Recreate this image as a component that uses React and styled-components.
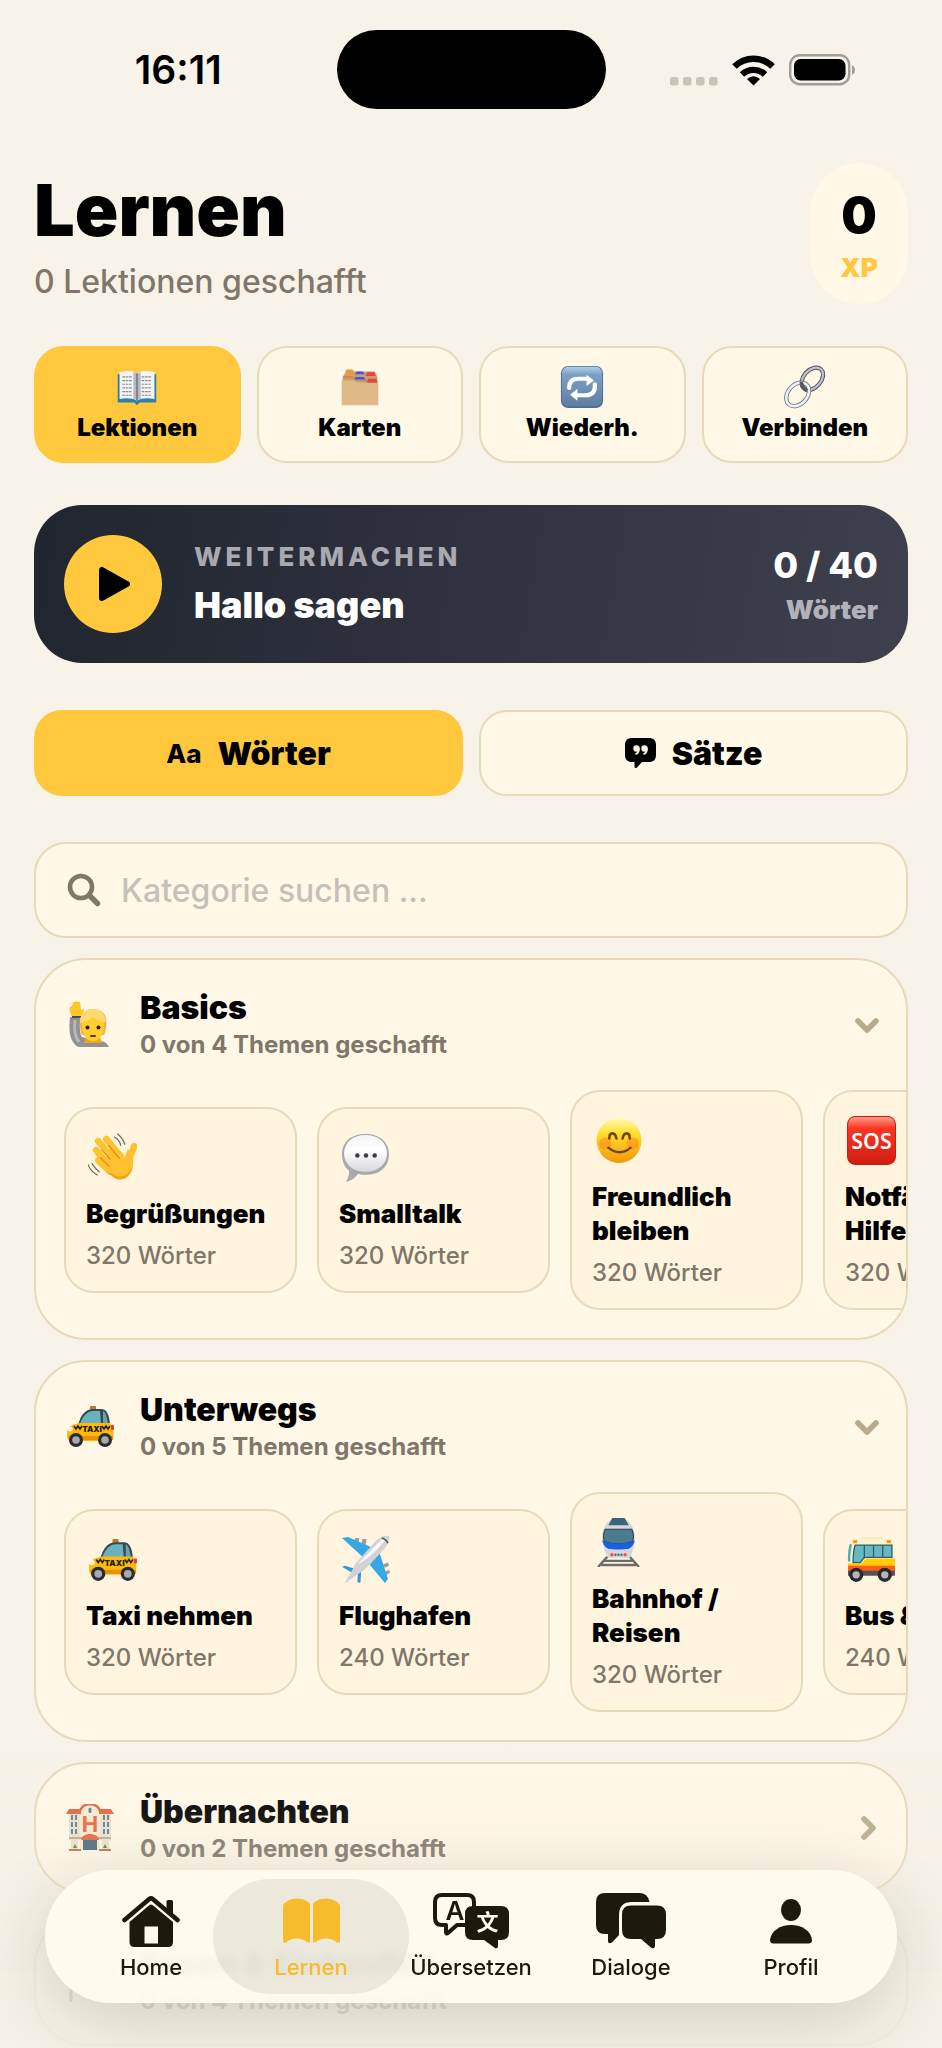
import React, { useState } from "react";
import styled, { createGlobalStyle, css } from "styled-components";

const color = {
  page: "#f8f3e8",
  surface: "#fff8e7",
  tile: "#fff5df",
  line: "#e8d9b9",
  muted: "#80766a",
  faint: "#b9aa8b",
  accent: "#ffc83d",
  ink: "#1d190d",
};

const GlobalStyle = createGlobalStyle`
  *, *::before, *::after { box-sizing: border-box; }
  body {
    margin: 0;
    background: ${color.page};
    color: #000;
    font-family: Inter, "Liberation Sans", sans-serif;
    -webkit-font-smoothing: antialiased;
  }
  button, input { font: inherit; color: inherit; }
  h1, h2, h3, p { margin: 0; }
`;

/* ---------- emoji drawings ---------- */

const BookEmoji = () => (
  <>
    <path d="M3 10h42v31H27l-3 3-3-3H3z" fill="#2b82a8" />
    <path d="M5 8c7-2 14-2 19 1 5-3 12-3 19-1v29c-7-1-14-1-19 2-5-3-12-3-19-2z" fill="#f4f4f6" />
    <path d="M20 8c2 0 3 1 4 2 1-1 2-2 4-2v29c-2 0-3 1-4 2-1-1-2-2-4-2z" fill="#b9bac0" />
    <path d="M24 9v30" stroke="#66676e" strokeWidth="1.4" />
    <path d="M8 13h11M8 17h11M8 21h10M8 25h11M8 29h10M8 33h11M29 13h11M29 17h11M29 21h10M29 25h11M29 29h10M29 33h11" stroke="#8c8d94" strokeWidth="1.3" strokeDasharray="3 .7" />
  </>
);

const DividersEmoji = () => (
  <>
    <path d="M5 13l4-6h31l3 6v10H5z" fill="#c99f6c" />
    <path d="M9 5h7l2 3H8zM8 10h8l2 3H6z" fill="#ff9433" />
    <path d="M20 7h7l2 3H19zM19 13h9l2 3H18z" fill="#4054f0" />
    <path d="M32 8h8l1 4H30zM33 15h9l1 4H31z" fill="#f73d3d" />
    <path d="M6 13h10l3 3h10l3 3h11" fill="none" stroke="#a87f4f" strokeWidth="1" />
    <path d="M4 17h14l2 2h12l2 1h10v24H4z" fill="#e0b988" />
  </>
);

const RepeatEmoji = () => (
  <>
    <rect x="1" y="1" width="46" height="46" rx="8" fill="#4f6f92" />
    <rect x="2" y="2" width="44" height="43" rx="7" fill="url(#repeatBlue)" />
    <path d="M10 25c0-7 4-10 10-10h10M38 21c1 8-3 12-10 12H18" fill="none" stroke="#fff" strokeWidth="4.6" strokeLinecap="round" />
    <path d="M29 10.500l8 6.500-8 6z M19 26v13l-8-6.500z" fill="#fff" />
  </>
);

const LinkEmoji = () => (
  <g fill="none">
    <ellipse cx="32" cy="15" rx="9.500" ry="14" transform="rotate(42 32 15)" stroke="#57505a" strokeWidth="4.600" />
    <ellipse cx="32" cy="15" rx="9.500" ry="14" transform="rotate(42 32 15)" stroke="#b9c5d3" strokeWidth="2.400" />
    <ellipse cx="16" cy="32" rx="10.500" ry="14.500" transform="rotate(42 16 32)" stroke="#66727f" strokeWidth="4.600" />
    <ellipse cx="16" cy="32" rx="10.500" ry="14.500" transform="rotate(42 16 32)" stroke="#eef2f6" strokeWidth="2.800" />
    <path d="M20 18c0 4 2 7 6 10" stroke="#5d5660" strokeWidth="4" />
  </g>
);

const RaisedHandEmoji = () => (
  <>
    <path d="M4 17c-1 10-1 19 3 25 2 3 4 5 7 5h29c-2-5-8-7-14-7l-13-3c-3-4-2-13-2-20z" fill="#929296" />
    <path d="M9 20c-1 8 0 17 4 22" fill="none" stroke="#b8b8bc" strokeWidth="3" />
    <path d="M6 17c-2-4-3-7-2-10l2-1 1-4h2l1-1 2 1h2l1 8 3-1c0 3-2 6-4 8z" fill="#ffc62b" />
    <path d="M6 17h9" stroke="#494a50" strokeWidth="1.800" />
    <path d="M20 37h14l2 6H18z" fill="#efa91c" />
    <path d="M14 26c-1-10 4-17 13-17 10 0 15 7 13 17 0 3-1 7-2 9H16c-1-2-2-6-2-9z" fill="#eeb53a" />
    <path d="M16 24c0-5 4-8 11-8s11 3 11 8c0 10-4 17-11 17s-11-7-11-17z" fill="#ffce2e" />
    <path d="M14 23c0-9 5-14 13-14 7 0 12 4 13 13-5 0-10-2-13-5-3 3-8 5-13 6z" fill="#ffd970" />
    <circle cx="21.500" cy="27.500" r="2" fill="#2a1a0c" />
    <circle cx="32.500" cy="27.500" r="2" fill="#2a1a0c" />
    <path d="M25 36h4" stroke="#6a3300" strokeWidth="2" fill="none" strokeLinecap="round" />
  </>
);

const WaveEmoji = () => (
  <>
    <g fill="none" strokeLinecap="round" strokeLinejoin="round" stroke="#ffc22e" strokeWidth="6.500">
      <path d="M10 8l15 17M18 6l14 17M8 17l15 17M10 27l12 11" />
      <path d="M45 13c-1 6-4 8-5 12" />
    </g>
    <path d="M24 37l-8-9 6-14 13 11 4-9 6 3c-1 5 0 14-3 20-4 7-12 9-19 3z" fill="#ffc22e" />
    <path d="M24 40c8 6 17 1 20-9-1 11-11 18-19 12l-8-6z" fill="#e98f0c" opacity=".6" />
    <path d="M13 16l9 10M20 12l11 13M12 24l9 9" stroke="#dd8b12" strokeWidth="1.200" fill="none" />
    <path d="M29 1q5 4 7 10M26 4q5 3 6 8M0 31q3 7 9 10M4 30q3 5 7 8" stroke="#6d6961" strokeWidth="1.200" fill="none" strokeLinecap="round" />
  </>
);

const SpeechEmoji = () => (
  <>
    <path d="M24 1c14 0 23 8 23 20S38 41 24 41c-2 0-5 0-7-1-3 4-7 7-12 8 2-4 3-7 3-11C3 33 1 27 1 21 1 9 10 1 24 1z" fill="#a8a8ad" />
    <path d="M24 2c13 0 21 8 21 18s-8 18-21 18C11 38 3 30 3 20S11 2 24 2z" fill="url(#bubbleWhite)" />
    <g fill="#3d3d40">
      <circle cx="16" cy="22" r="2.200" />
      <circle cx="24.500" cy="22" r="2.200" />
      <circle cx="33" cy="22" r="2.200" />
    </g>
  </>
);

const SmileEmoji = () => (
  <>
    <circle cx="24.500" cy="24" r="22" fill="url(#faceYellow)" />
    <circle cx="11" cy="27" r="6" fill="#ff8411" opacity=".5" />
    <circle cx="38" cy="27" r="6" fill="#ff8411" opacity=".5" />
    <path d="M15 22q0-5 3-5t4 5M28 22q1-5 4-5t3 5" stroke="#754300" strokeWidth="2.500" fill="none" strokeLinecap="round" />
    <path d="M14 31q11 9 22 0" stroke="#754300" strokeWidth="2.200" fill="none" strokeLinecap="round" />
  </>
);

const SosEmoji = () => (
  <>
    <rect x="0" y="0" width="48" height="48" rx="8" fill="#c81d10" />
    <rect x="1" y="1" width="46" height="45" rx="7" fill="url(#sosRed)" />
    <text x="24" y="32" textAnchor="middle" fontFamily="Noto Sans, sans-serif" fontWeight="600" fontSize="21" fill="#fff">SOS</text>
  </>
);

const TaxiEmoji = () => (
  <>
    <rect x="24" y="4" width="6" height="4" rx="1" fill="#b17e31" />
    <path d="M12 23C15 12 20 7 27 7h8c6 0 8 6 9 15z" fill="#3c4550" />
    <path d="M14 22c3-9 8-13 13-13h7l1 13z" fill="#69b3bf" />
    <path d="M37 9c3 1 4 7 5 12l-5 1z" fill="#62a4b0" />
    <path d="M1 31c0-6 5-9 13-10h30c3 3 4 8 3 16l-3 2H3c-2-2-2-5-2-8z" fill="#ffb90c" />
    <path d="M2 34h45v4H3z" fill="#e99200" />
    <path d="M8 24l2 3 2-3 2 3 2-3M36 24l2 3 2-3 2 3 2-3" stroke="#2d2616" strokeWidth="1.600" fill="none" />
    <text x="26" y="30" textAnchor="middle" fontFamily="Inter, sans-serif" fontWeight="900" fontSize="8" fill="#241e0d">TAXI</text>
    <circle cx="4" cy="27" r="2.600" fill="#fff3e2" />
    <rect x="45" y="23" width="3" height="5" rx="1" fill="#ef3838" />
    <circle cx="10" cy="38" r="7" fill="#2b2c31" />
    <circle cx="10" cy="38" r="3.800" fill="#a7a9af" />
    <circle cx="39" cy="38" r="7" fill="#2b2c31" />
    <circle cx="39" cy="38" r="3.800" fill="#a7a9af" />
  </>
);

const PlaneEmoji = () => (
  <>
    <path d="M14 3h4l-1 6h-4zM21 4h4l-1 6h-4zM46 27l-5 2 2 3 4-2zM47 34l-4 2v4l5-3z" fill="#9a9aa0" />
    <path d="M1 3l6-1 25 11-9 10zM46 43l-3 4-15-18 10-11z" fill="#35a7e4" />
    <path d="M1 31l3-1 13 4-3 5zM19 47l-3-1 1-13 3-2z" fill="#3398d6" />
    <path d="M4 46C12 34 12 31 16 26L35 5c4-4 9-5 12-4 1 4-1 8-4 12L23 34c-5 4-10 6-18 13z" fill="#d1d1d6" />
    <path d="M16 29L36 8c3-3 6-5 9-5-8 10-17 20-29 26z" fill="#fafafc" />
    <path d="M40 3q4 1 6 5" stroke="#55565f" strokeWidth="1.600" fill="none" />
  </>
);

const TrainEmoji = () => (
  <>
    <path d="M13 38L4 48M35 38l9 10M10 42h28M7 46h34" stroke="#6e6a6a" strokeWidth="2.400" />
    <path d="M17 1h14c6 4 9 11 9 17 0 9-2 15-5 21H14c-3-6-6-12-6-21C8 12 11 5 17 1z" fill="#d5d6dc" />
    <path d="M18 0h12l4 7H14z" fill="#37657b" />
    <path d="M11 11h26c2 4 2 8 1 12-8 3-20 3-28 0-1-4-1-8 1-12z" fill="#4a7c90" stroke="#2c3b48" strokeWidth="1" />
    <path d="M8 22c9 4 23 4 32 0-1 4-3 7-6 8-6 1-14 1-20 0-3-1-5-4-6-8z" fill="#1660e8" />
    <path d="M20 36h2M23 36h2M26 36h2" stroke="#55555c" strokeWidth="2" />
    <circle cx="17.500" cy="36" r="1.600" fill="#f0532e" />
    <circle cx="30.500" cy="36" r="1.600" fill="#f0532e" />
  </>
);

const BusEmoji = () => (
  <>
    <rect x="12" y="2" width="24" height="4" rx="2" fill="#f3edc4" />
    <path d="M4 4h40c2 0 3 1 3 3v31H1V22C1 14 2 8 4 4z" fill="#f7f2cf" />
    <path d="M1 28h13l5-5h28v8H1z" fill="#ffcc0a" />
    <path d="M1 30h46v6H1z" fill="#ff5d13" />
    <path d="M8 10h36v12H17l-4 5H6c0-6 0-12 2-17z" fill="#65b9c4" stroke="#3b5962" strokeWidth="1.300" />
    <path d="M2 26c0-7 0-13 2-17" stroke="#53a8b5" strokeWidth="2.400" />
    <path d="M17 10v13M26 10v12M35 10v12" stroke="#3b5962" strokeWidth="1.300" />
    <rect x="6" y="5" width="4" height="3" fill="#ff9317" />
    <rect x="39" y="5" width="4" height="3" fill="#ff9317" />
    <path d="M1 35h46v5H1z" fill="#53555a" />
    <circle cx="9" cy="39" r="7" fill="#292a2e" />
    <circle cx="9" cy="39" r="3.600" fill="#b4b6bb" />
    <circle cx="37" cy="39" r="7" fill="#292a2e" />
    <circle cx="37" cy="39" r="3.600" fill="#b4b6bb" />
  </>
);

const HotelEmoji = () => (
  <>
    <path d="M3 9h42v37H3z" fill="#eee0c8" />
    <path d="M14 8c2-8 18-8 20 0v38H14z" fill="#f7ead3" />
    <path d="M0 10l3-5h12v5zM48 10l-3-5H33v5z" fill="#e3633c" />
    <path d="M14 7C17-2 31-2 34 7" fill="none" stroke="#e3633c" strokeWidth="2.400" />
    <rect x="22.500" y="4" width="3" height="5" rx="1" fill="#55809d" />
    <text x="24" y="28" textAnchor="middle" fontFamily="Inter, sans-serif" fontWeight="700" fontSize="22" fill="#ea6236">H</text>
    <path d="M5 11h2v5H5zM9 11h2v5H9zM5 18h2v5H5zM9 18h2v5H9zM5 25h2v5H5zM9 25h2v5H9zM37 11h2v5h-2zM41 11h2v5h-2zM37 18h2v5h-2zM41 18h2v5h-2zM37 25h2v5h-2zM41 25h2v5h-2z" fill="#55809d" />
    <path d="M3 34h42" stroke="#b7aa99" strokeWidth="2" />
    <path d="M15 36c1-8 17-8 18 0z" fill="#e3633c" />
    <rect x="17" y="36" width="14" height="10" fill="#49677c" />
    <path d="M13 36v10M35 36v10M4 36v10M44 36v10" stroke="#fff6e4" strokeWidth="2" />
    <path d="M7 44l2-4 2 4zM37 44l2-4 2 4z" fill="#3c8a35" />
    <path d="M3 46h12M33 46h12" stroke="#c86b4c" strokeWidth="2" />
  </>
);

const PlateEmoji = () => (
  <>
    <circle cx="24" cy="24" r="15" fill="#e7e8ee" stroke="#c2c4cc" strokeWidth="1.500" />
    <circle cx="24" cy="24" r="9" fill="#f6f7fa" />
    <path d="M3 4v12q2 3 4 0V4M5 16v30M43 4q4 8 3 20h-3zM44 24v22" stroke="#8d909a" strokeWidth="3" fill="none" />
  </>
);

const EMOJI = {
  book: BookEmoji,
  dividers: DividersEmoji,
  repeat: RepeatEmoji,
  link: LinkEmoji,
  raised: RaisedHandEmoji,
  wave: WaveEmoji,
  speech: SpeechEmoji,
  smile: SmileEmoji,
  sos: SosEmoji,
  taxi: TaxiEmoji,
  plane: PlaneEmoji,
  train: TrainEmoji,
  bus: BusEmoji,
  hotel: HotelEmoji,
  plate: PlateEmoji,
};

const Emoji = ({ name, size }) => {
  const Drawing = EMOJI[name];
  return (
    <svg width={size} height={size} viewBox="0 0 48 48" aria-hidden="true">
      <Drawing />
    </svg>
  );
};

const HiddenSvg = styled.svg`
  position: absolute;
  width: 0;
  height: 0;
`;

const GradientDefs = () => (
  <HiddenSvg aria-hidden="true">
    <defs>
      <linearGradient id="repeatBlue" x1="0" y1="0" x2="0" y2="1">
        <stop offset="0" stopColor="#b4cfe6" />
        <stop offset=".2" stopColor="#7ba0c6" />
        <stop offset="1" stopColor="#5f7f9f" />
      </linearGradient>
      <linearGradient id="bubbleWhite" x1="0" y1="0" x2="0" y2="1">
        <stop offset="0" stopColor="#f4f4f6" />
        <stop offset=".4" stopColor="#ffffff" />
        <stop offset="1" stopColor="#d9d9dd" />
      </linearGradient>
      <linearGradient id="faceYellow" x1="0" y1="0" x2="0" y2="1">
        <stop offset="0" stopColor="#fffbb0" />
        <stop offset=".35" stopColor="#ffdd2c" />
        <stop offset="1" stopColor="#f0980a" />
      </linearGradient>
      <linearGradient id="sosRed" x1="0" y1="0" x2="0" y2="1">
        <stop offset="0" stopColor="#ff9a8a" />
        <stop offset=".25" stopColor="#fb3520" />
        <stop offset="1" stopColor="#d01f10" />
      </linearGradient>
    </defs>
  </HiddenSvg>
);

/* ---------- layout ---------- */

const Screen = styled.div`
  display: flex;
  flex-direction: column;
  min-height: 100vh;
`;

const StatusBar = styled.header`
  display: grid;
  grid-template-columns: 1fr 269px 1fr;
  align-items: center;
  padding-top: 30px;
`;

const Clock = styled.time`
  justify-self: center;
  padding-left: 20px;
  font-size: 39px;
  font-weight: 600;
`;

const Island = styled.div`
  height: 79px;
  border-radius: 40px;
  background: #000;
`;

const StatusIcons = styled.div`
  display: flex;
  align-items: flex-end;
  justify-self: center;
  gap: 14px;
  padding-right: 22px;
`;

const Main = styled.main`
  display: flex;
  flex-direction: column;
  padding: 54px 34px 0;
`;

const TitleRow = styled.section`
  display: flex;
  justify-content: space-between;
  align-items: flex-start;
`;

const TitleBlock = styled.div`
  display: flex;
  flex-direction: column;
  gap: 10px;
  padding-top: 5px;
`;

const Title = styled.h1`
  font-size: 72px;
  line-height: 84px;
  font-weight: 900;
`;

const Subtitle = styled.p`
  font-size: 32px;
  line-height: 40px;
  font-weight: 500;
  color: ${color.muted};
`;

const XpBadge = styled.div`
  display: flex;
  flex-direction: column;
  align-items: center;
  gap: 8px;
  min-width: 98px;
  padding: 22px 20px 21px;
  border-radius: 49px;
  background: ${color.surface};
`;

const XpValue = styled.strong`
  font-size: 50px;
  line-height: 60px;
  font-weight: 900;
`;

const XpLabel = styled.span`
  font-size: 26px;
  line-height: 30px;
  font-weight: 900;
  color: ${color.accent};
`;

const ButtonRow = styled.div`
  display: grid;
  grid-auto-flow: column;
  grid-auto-columns: minmax(0, 1fr);
  gap: 16px;
  margin-top: ${(p) => p.$space}px;
`;

const selectable = css`
  border: 2px solid ${(p) => (p.$active ? color.accent : color.line)};
  background: ${(p) => (p.$active ? color.accent : color.surface)};
  cursor: pointer;
`;

const ModeButton = styled.button`
  ${selectable}
  display: flex;
  flex-direction: column;
  align-items: center;
  gap: 4px;
  padding: 17px 8px 18px;
  border-radius: 30px;
  font-size: 24px;
  line-height: 30px;
  font-weight: 900;
`;

const KindButton = styled.button`
  ${selectable}
  display: flex;
  align-items: center;
  justify-content: center;
  gap: 16px;
  height: 86px;
  border-radius: 28px;
  font-size: 32px;
  font-weight: 900;
`;

const LetterMark = styled.span`
  font-size: 26px;
  font-weight: 800;
`;

const ContinueCard = styled.section`
  display: flex;
  align-items: center;
  gap: 32px;
  margin-top: 42px;
  padding: 30px;
  border-radius: 48px;
  background: linear-gradient(100deg, #20252f, #2d303c 40%, #3f404e);
  color: #fff;
`;

const PlayButton = styled.button`
  display: grid;
  place-items: center;
  width: 98px;
  height: 98px;
  padding: 0;
  border: 0;
  border-radius: 50%;
  background: ${color.accent};
  cursor: pointer;
`;

const ContinueText = styled.div`
  display: flex;
  flex: 1;
  flex-direction: column;
  gap: 10px;
`;

const Overline = styled.p`
  font-size: 26px;
  line-height: 32px;
  font-weight: 800;
  letter-spacing: 4px;
  color: #a9a9af;
`;

const ContinueTitle = styled.h2`
  font-size: 36px;
  line-height: 44px;
  font-weight: 900;
`;

const Progress = styled.div`
  display: flex;
  flex-direction: column;
  align-items: flex-end;
  gap: 7px;
  font-size: 36px;
  line-height: 44px;
  font-weight: 800;
`;

const ProgressUnit = styled.span`
  font-size: 26px;
  line-height: 32px;
  font-weight: 900;
  color: #b2b2b8;
`;

const SearchField = styled.label`
  display: flex;
  align-items: center;
  gap: 20px;
  height: 96px;
  margin-top: 46px;
  padding: 0 31px;
  border: 2px solid ${color.line};
  border-radius: 32px;
  background: ${color.surface};
`;

const SearchInput = styled.input`
  flex: 1;
  min-width: 0;
  padding: 0;
  border: 0;
  outline: 0;
  background: none;
  font-size: 32px;
  font-weight: 500;
  &::placeholder {
    color: #c5c1b8;
    opacity: 1;
  }
`;

const Categories = styled.div`
  display: flex;
  flex-direction: column;
  gap: 20px;
  padding: 20px 0 2px;
`;

const CategoryCard = styled.section`
  overflow: hidden;
  border: 2px solid ${color.line};
  border-radius: 52px;
  background: ${color.surface};
`;

const CategoryHeader = styled.button`
  display: flex;
  align-items: center;
  gap: 24px;
  width: 100%;
  padding: 28px 26px 28px 28px;
  border: 0;
  background: none;
  text-align: left;
  cursor: pointer;
`;

const CategoryIcon = styled.span`
  display: flex;
  justify-content: center;
  width: 52px;
`;

const CategoryText = styled.span`
  display: flex;
  flex: 1;
  flex-direction: column;
  gap: 2px;
`;

const CategoryTitle = styled.span`
  font-size: 32px;
  line-height: 40px;
  font-weight: 900;
`;

const CategoryMeta = styled.span`
  font-size: 24px;
  line-height: 30px;
  font-weight: 700;
  color: ${color.muted};
`;

const TopicScroller = styled.div`
  display: flex;
  align-items: center;
  gap: 20px;
  padding: 2px 28px 28px;
  overflow-x: auto;
  scrollbar-width: none;
`;

const TopicTile = styled.a`
  display: flex;
  flex: none;
  flex-direction: column;
  width: 233px;
  padding: 20px 18px 20px 20px;
  border: 2px solid ${color.line};
  border-radius: 30px;
  background: ${color.tile};
  color: inherit;
  text-decoration: none;
`;

const TopicIcon = styled.span`
  display: flex;
  align-items: center;
  height: 56px;
  padding-left: 2px;
`;

const TopicTitle = styled.h3`
  margin: 12px 0 10px;
  font-size: 26px;
  line-height: 34px;
  font-weight: 900;
  white-space: pre-line;
`;

const TopicMeta = styled.span`
  font-size: 24px;
  line-height: 30px;
  font-weight: 500;
  color: ${color.muted};
`;

const BottomFade = styled.div`
  position: fixed;
  inset: auto 0 0;
  height: 300px;
  background: linear-gradient(
    rgba(245, 241, 230, 0),
    rgba(245, 241, 230, 0.16) 36%,
    rgba(245, 241, 230, 0.74) 66%,
    rgba(245, 241, 230, 0.86)
  );
  pointer-events: none;
`;

const TabBar = styled.nav`
  position: fixed;
  inset: auto 45px 45px;
  display: flex;
  padding: 0 26px;
  border-radius: 67px;
  background: rgba(255, 252, 240, 0.84);
  backdrop-filter: blur(4px);
  box-shadow: 0 16px 70px rgba(30, 28, 10, 0.17);
`;

const TabLink = styled.a`
  position: relative;
  display: flex;
  flex: 1;
  flex-direction: column;
  align-items: center;
  gap: 5px;
  padding: 23px 0;
  color: ${(p) => (p.$active ? "#f6bc2b" : color.ink)};
  font-size: 22px;
  line-height: 26px;
  font-weight: 500;
  text-decoration: none;

  ${(p) =>
    p.$active &&
    css`
      &::before {
        content: "";
        position: absolute;
        inset: 9px -18px;
        z-index: -1;
        border-radius: 58px;
        background: rgba(30, 26, 8, 0.08);
      }
    `}
`;

const TabIcon = styled.span`
  display: flex;
  align-items: center;
  height: 56px;
`;

/* ---------- icons ---------- */

const SignalIcon = () => (
  <svg width="48" height="9" viewBox="0 0 48 9" fill="#c8c4b8" aria-hidden="true">
    {[0, 13, 26, 39].map((x) => (
      <rect key={x} x={x} y="0" width="8.500" height="8.500" rx="2.500" />
    ))}
  </svg>
);

const WifiIcon = () => (
  <svg width="43" height="31" viewBox="0 0 43 31" aria-hidden="true">
    <path d="M2.500 11.500a27 27 0 0 1 38 0" fill="none" stroke="#000" strokeWidth="6.400" />
    <path d="M10 19.500a16.500 16.500 0 0 1 23 0" fill="none" stroke="#000" strokeWidth="6.200" />
    <path d="M21.500 30.500l-6.500-6.500q6.500-5.500 13 0z" />
  </svg>
);

const BatteryIcon = () => (
  <svg width="66" height="32" viewBox="0 0 66 32" aria-hidden="true">
    <rect x="1.200" y="1.200" width="59" height="29" rx="9.500" fill="none" stroke="#a19e97" strokeWidth="2.400" />
    <rect x="5" y="5" width="51.500" height="21.500" rx="6.500" />
    <path d="M63 11c4 2 4 8 0 10z" fill="#a19e97" />
  </svg>
);

const PlayIcon = () => (
  <svg width="38" height="38" viewBox="0 0 38 38" aria-hidden="true">
    <path d="M8 5v28L33 19z" stroke="#000" strokeWidth="6" strokeLinejoin="round" />
  </svg>
);

const QuoteIcon = () => (
  <svg width="31" height="30" viewBox="0 0 31 30" aria-hidden="true">
    <path d="M7 0h17c4.500 0 7 2.500 7 7v10c0 4.500-2.500 7-7 7h-7l-5 5.500c-1 1-2.500.5-2.500-1V24H7c-4.500 0-7-2.500-7-7V7c0-4.500 2.500-7 7-7z" />
    <g fill={color.surface}>
      <circle cx="11.500" cy="10.500" r="3.200" />
      <circle cx="19.500" cy="10.500" r="3.200" />
      <path d="M14.700 10c.3 4-1.200 6.200-4 7l-.6-1.400c1.500-.8 2.300-1.600 2.200-3zM22.700 10c.3 4-1.200 6.200-4 7l-.6-1.400c1.500-.8 2.300-1.600 2.200-3z" />
    </g>
  </svg>
);

const SearchIcon = () => (
  <svg width="34" height="34" viewBox="0 0 34 34" fill="none" stroke={color.muted} strokeWidth="4.600" strokeLinecap="round" aria-hidden="true">
    <circle cx="14" cy="14" r="11" />
    <path d="M22.500 22.500l8 8" strokeWidth="5.400" />
  </svg>
);

const ChevronIcon = ({ open }) => (
  <svg width="26" height="26" viewBox="0 0 26 26" fill="none" stroke={color.faint} strokeWidth="5.600" strokeLinecap="round" strokeLinejoin="round" aria-hidden="true">
    <path d={open ? "M4 10l9 9 9-9" : "M10 4l9 9-9 9"} />
  </svg>
);

const HomeIcon = () => (
  <svg width="60" height="53" viewBox="0 0 60 53" aria-hidden="true">
    <path d="M45.500 18V6.500q0-1.500 1.500-1.500h3.500q1.500 0 1.500 1.500V21z" fill="currentColor" />
    <path d="M3.500 25L28 4.200q2-1.600 4 0L56.500 25" fill="none" stroke="currentColor" strokeWidth="4.600" strokeLinecap="round" strokeLinejoin="round" />
    <path fillRule="evenodd" d="M8.500 27L28.500 10q1.500-1.200 3 0L52 27v20q0 5-5 5H13.500q-5 0-5-5zM23.500 31.500v17H37v-17z" fill="currentColor" />
  </svg>
);

const OpenBookIcon = () => (
  <svg width="57" height="46" viewBox="0 0 57 46" fill="currentColor" aria-hidden="true">
    <path d="M0 8C0 5 7 .5 14 .5S27 4 27 7v36q0 2-2 1.500C18 39 9 39 3 44.500q-3 1.500-3-2z" />
    <path d="M57 8C57 5 50 .5 43 .5S30 4 30 7v36q0 2 2 1.500C39 39 48 39 54 44.500q3 1.500 3-2z" />
  </svg>
);

const TranslateIcon = () => (
  <svg width="77" height="56" viewBox="0 0 77 56" aria-hidden="true">
    <path d="M9 2h25q7 0 7 7v16q0 7-7 7H24l-9 8q-2 1.500-2-1v-7H9q-7 0-7-7V9q0-7 7-7z" fill="none" stroke="currentColor" strokeWidth="4" strokeLinejoin="round" />
    <text x="22" y="27" textAnchor="middle" fontFamily="Inter, sans-serif" fontWeight="600" fontSize="26" fill="currentColor">A</text>
    <path d="M40 13h28q8 0 8 8v18q0 8-8 8h-3v6q0 3-3 2l-11-8H40q-8 0-8-8V21q0-8 8-8z" fill="currentColor" />
    <text x="54.500" y="37" textAnchor="middle" fontFamily="Noto Sans CJK SC, sans-serif" fontWeight="700" fontSize="22" fill="#fffcf0">文</text>
  </svg>
);

const ChatIcon = () => (
  <svg width="70" height="56" viewBox="0 0 70 56" fill="currentColor" aria-hidden="true">
    <path d="M9 0h34q9 0 10.500 9H36q-13 0-13 13v20l-7 7.500q-3.500 2-4-1V41H9q-9 0-9-9V9q0-9 9-9z" />
    <path d="M35 12.500h26q9 0 9 9V37q0 9-9 9h-2v7q0 3-3.500 2L45 46H35q-9 0-9-9V21.500q0-9 9-9z" />
  </svg>
);

const ProfileIcon = () => (
  <svg width="42" height="45" viewBox="0 0 42 45" fill="currentColor" aria-hidden="true">
    <ellipse cx="21" cy="11" rx="10" ry="11" />
    <path d="M0 41C1 32 10 26 21 26s20 6 21 15q0 3.500-3.500 3.500h-35Q0 44.500 0 41z" />
  </svg>
);

/* ---------- data ---------- */

const MODES = [
  { label: "Lektionen", emoji: "book" },
  { label: "Karten", emoji: "dividers" },
  { label: "Wiederh.", emoji: "repeat" },
  { label: "Verbinden", emoji: "link" },
];

const CATEGORIES = [
  {
    title: "Basics",
    emoji: "raised",
    total: 4,
    topics: [
      { title: "Begrüßungen", emoji: "wave", words: 320 },
      { title: "Smalltalk", emoji: "speech", words: 320 },
      { title: "Freundlich bleiben", emoji: "smile", words: 320 },
      { title: "Notfälle &\nHilfe", emoji: "sos", words: 320 },
    ],
  },
  {
    title: "Unterwegs",
    emoji: "taxi",
    total: 5,
    topics: [
      { title: "Taxi nehmen", emoji: "taxi", words: 320 },
      { title: "Flughafen", emoji: "plane", words: 240 },
      { title: "Bahnhof /\nReisen", emoji: "train", words: 320 },
      { title: "Bus & Bahn", emoji: "bus", words: 240 },
    ],
  },
  { title: "Übernachten", emoji: "hotel", total: 2, topics: [] },
  { title: "Essen & Einkaufen", emoji: "plate", total: 4, topics: [] },
];

const TABS = [
  { label: "Home", Icon: HomeIcon },
  { label: "Lernen", Icon: OpenBookIcon },
  { label: "Übersetzen", Icon: TranslateIcon },
  { label: "Dialoge", Icon: ChatIcon },
  { label: "Profil", Icon: ProfileIcon },
];

const Category = ({ title, emoji, total, topics }) => {
  const [open, setOpen] = useState(topics.length > 0);
  return (
    <CategoryCard>
      <CategoryHeader type="button" aria-expanded={open} onClick={() => setOpen(!open)}>
        <CategoryIcon>
          <Emoji name={emoji} size={48} />
        </CategoryIcon>
        <CategoryText>
          <CategoryTitle>{title}</CategoryTitle>
          <CategoryMeta>0 von {total} Themen geschafft</CategoryMeta>
        </CategoryText>
        <ChevronIcon open={open} />
      </CategoryHeader>
      {open && topics.length > 0 && (
        <TopicScroller>
          {topics.map((topic) => (
            <TopicTile key={topic.title} href="#thema">
              <TopicIcon>
                <Emoji name={topic.emoji} size={49} />
              </TopicIcon>
              <TopicTitle>{topic.title}</TopicTitle>
              <TopicMeta>{topic.words} Wörter</TopicMeta>
            </TopicTile>
          ))}
        </TopicScroller>
      )}
    </CategoryCard>
  );
};

export default function App() {
  const [mode, setMode] = useState("Lektionen");
  const [kind, setKind] = useState("Wörter");

  return (
    <Screen>
      <GlobalStyle />
      <GradientDefs />
      <StatusBar>
        <Clock>16:11</Clock>
        <Island />
        <StatusIcons>
          <SignalIcon />
          <WifiIcon />
          <BatteryIcon />
        </StatusIcons>
      </StatusBar>

      <Main>
        <TitleRow>
          <TitleBlock>
            <Title>Lernen</Title>
            <Subtitle>0 Lektionen geschafft</Subtitle>
          </TitleBlock>
          <XpBadge>
            <XpValue>0</XpValue>
            <XpLabel>XP</XpLabel>
          </XpBadge>
        </TitleRow>

        <ButtonRow $space={42}>
          {MODES.map(({ label, emoji }) => (
            <ModeButton key={label} type="button" $active={mode === label} onClick={() => setMode(label)}>
              <Emoji name={emoji} size={44} />
              {label}
            </ModeButton>
          ))}
        </ButtonRow>

        <ContinueCard>
          <PlayButton type="button" aria-label="Weitermachen">
            <PlayIcon />
          </PlayButton>
          <ContinueText>
            <Overline>WEITERMACHEN</Overline>
            <ContinueTitle>Hallo sagen</ContinueTitle>
          </ContinueText>
          <Progress>
            0 / 40
            <ProgressUnit>Wörter</ProgressUnit>
          </Progress>
        </ContinueCard>

        <ButtonRow $space={47}>
          <KindButton type="button" $active={kind === "Wörter"} onClick={() => setKind("Wörter")}>
            <LetterMark aria-hidden="true">Aa</LetterMark>
            Wörter
          </KindButton>
          <KindButton type="button" $active={kind === "Sätze"} onClick={() => setKind("Sätze")}>
            <QuoteIcon />
            Sätze
          </KindButton>
        </ButtonRow>

        <SearchField>
          <SearchIcon />
          <SearchInput type="text" aria-label="Kategorie suchen" placeholder="Kategorie suchen ..." />
        </SearchField>

        <Categories>
          {CATEGORIES.map((category) => (
            <Category key={category.title} {...category} />
          ))}
        </Categories>
      </Main>

      <BottomFade />
      <TabBar>
        {TABS.map(({ label, Icon }) => (
          <TabLink key={label} href={`#${label.toLowerCase()}`} $active={label === "Lernen"}>
            <TabIcon>
              <Icon />
            </TabIcon>
            {label}
          </TabLink>
        ))}
      </TabBar>
    </Screen>
  );
}
